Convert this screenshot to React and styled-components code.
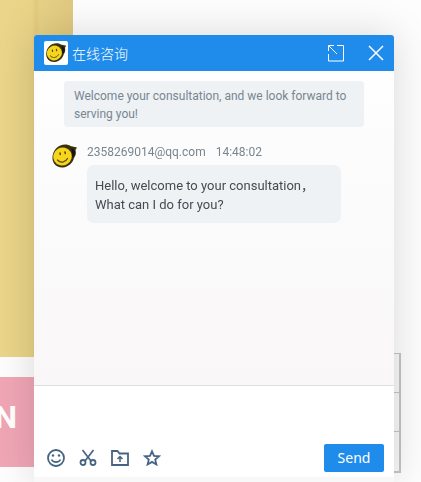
import React from "react";
import styled, { createGlobalStyle } from "styled-components";

const GlobalStyle = createGlobalStyle`
  *, *::before, *::after { box-sizing: border-box; }
  html, body, #root { height: 100%; }
  body {
    margin: 0;
    overflow: hidden;
    background: #fdfdfd;
    font-family: Roboto, "Noto Sans CJK SC", sans-serif;
  }
`;

const Page = styled.main`
  display: flex;
  justify-content: space-between;
  align-items: flex-start;
  height: 100%;
  overflow: hidden;
`;

const Promo = styled.div`
  display: flex;
  flex-direction: column;
  gap: 20px;
`;

const Poster = styled.div`
  width: 73px;
  height: 357px;
  background: linear-gradient(90deg, #ead58a 0, #e9d387 32px, #e2ca7c 36px, #e6d085 40px, #e0c97f 73px);
`;

const Banner = styled.div`
  display: flex;
  align-items: center;
  justify-content: flex-end;
  width: 73px;
  height: 90px;
  padding: 0 56px 10px 0;
  background: #f0a6b5;
  color: #ffffff;
  font-family: Roboto, sans-serif;
  font-size: 32px;
  font-weight: 700;
`;

const Grid = styled.div`
  display: grid;
  grid-template-rows: repeat(3, 1fr);
  width: 60px;
  height: 120px;
  margin: 353px 20px 0 0;
  border: 1px solid #c4c4c4;
  border-width: 1px 2px 2px 0;
  background: #f8f8f8;
`;

const GridCell = styled.div`
  border-bottom: 1px solid #c4c4c4;
  &:last-child { border-bottom: 0; }
`;

const Chat = styled.section`
  position: fixed;
  inset: 35px 27px 0 34px;
  display: flex;
  flex-direction: column;
  border-radius: 3px 3px 0 0;
  background: #f8f8f8;
  box-shadow: 0 0 40px rgba(0, 0, 0, 0.15);
`;

const Header = styled.header`
  display: flex;
  align-items: center;
  height: 36px;
  padding: 0 10px;
  border-radius: 3px 3px 0 0;
  background: #1f8ceb;
  color: #ffffff;
`;

const HeaderAvatar = styled.span`
  display: flex;
  width: 24px;
  height: 24px;
  margin-right: 4px;
  padding: 1px;
  border-radius: 2px;
  background: #ffffff;
`;

const Title = styled.h1`
  flex: 1;
  margin: 0;
  padding-bottom: 1px;
  font-family: "Noto Sans CJK SC", sans-serif;
  font-size: 14px;
  font-weight: 300;
  line-height: 20px;
`;

const IconButton = styled.button`
  display: flex;
  padding: 0;
  border: 0;
  background: none;
  color: inherit;
  cursor: pointer;
`;

const HeaderActions = styled.div`
  display: flex;
  align-items: center;
  gap: 24px;
`;

const Messages = styled.div`
  flex: 1;
  padding: 10px 0 0;
  background: linear-gradient(#fefefe, #f9f7f7);
`;

const Notice = styled.p`
  margin: 0 30px 16px;
  padding: 6px 10px 4px;
  border-radius: 4px;
  background: #eef2f5;
  color: #788691;
  font-size: 12px;
  line-height: 18px;
`;

const Message = styled.article`
  display: flex;
  gap: 9px;
  padding: 0 53px 0 17px;
`;

const MessageAvatar = styled.span`
  display: flex;
  flex: none;
  width: 27px;
  height: 27px;
`;

const MessageBody = styled.div`
  flex: 1;
`;

const Meta = styled.div`
  display: flex;
  gap: 10px;
  margin-bottom: 4px;
  color: #788691;
  font-size: 12px;
  line-height: 18px;
  white-space: nowrap;
`;

const Bubble = styled.p`
  margin: 0;
  padding: 11px 8px 9px;
  border-radius: 7px;
  background: #eef2f5;
  color: #454b52;
  font-size: 13px;
  line-height: 19px;
  white-space: nowrap;
`;

const Composer = styled.form`
  display: flex;
  flex-direction: column;
  margin-bottom: 5px;
  border-top: 1px solid #dedfe1;
  background: #ffffff;
`;

const Input = styled.textarea`
  display: block;
  width: 100%;
  height: 58px;
  padding: 8px 12px;
  border: 0;
  outline: 0;
  resize: none;
  background: transparent;
  font: 13px/19px Roboto, "Noto Sans CJK SC", sans-serif;
`;

const Toolbar = styled.div`
  display: flex;
  align-items: center;
  gap: 12px;
  padding: 0 10px 5px 12px;
  color: #466482;
`;

const SendButton = styled.button`
  width: 60px;
  height: 28px;
  margin-left: auto;
  padding: 0;
  border: 0;
  border-radius: 2px;
  background: #1f8ceb;
  color: #ffffff;
  font: 14px/20px "Noto Sans", sans-serif;
  cursor: pointer;
`;

const Face = () => (
  <svg width="100%" height="100%" viewBox="0 0 27 27" fill="none" aria-hidden="true">
    <path d="M5 5.500C9 1 16 .5 19.500 3L26 4.500 24.500 7c1 3 0 6-1.500 8-1 5-6 9-11 9.500C6 25 2 21 1.500 16c-.3-4 1-8 3.500-10.500Z" fill="#3a310e" />
    <ellipse cx="11.500" cy="13.500" rx="9.300" ry="9" transform="rotate(-30 11.500 13.500)" fill="#f5d61d" />
    <path d="M20 5c4 1 5 5 3 8l-2 1.500C21.500 11 21 8 20 5Z" fill="#17150e" />
    <path d="M6.500 17c3 3.500 8 2.500 10-1.500" stroke="#5c480c" strokeWidth="1.200" strokeLinecap="round" />
    <path d="m9 10 .3 1.500M14 9l.3 1.500" stroke="#5c480c" strokeWidth="1.500" strokeLinecap="round" />
  </svg>
);

const ExpandIcon = () => (
  <svg width="16" height="17" viewBox="0 0 16 17" fill="none" stroke="currentColor" aria-hidden="true">
    <path d="M9 .5h6.500v15.500H.5V9M.5 6V.5H6M1 1l8 8" />
  </svg>
);

const CloseIcon = () => (
  <svg width="16" height="16" viewBox="0 0 16 16" fill="none" stroke="currentColor" aria-hidden="true">
    <path d="m1 1 14 14M15 1 1 15" strokeWidth="1.500" />
  </svg>
);

const ToolIcon = styled.svg.attrs({
  width: 20,
  height: 20,
  viewBox: "0 0 20 20",
  fill: "none",
  stroke: "currentColor",
  strokeWidth: 2,
  "aria-hidden": true,
})`
  display: block;
`;

const SmileIcon = () => (
  <ToolIcon>
    <circle cx="10" cy="10" r="8" strokeWidth="1.800" />
    <path d="M5.500 11.500c1.500 3.500 7.500 3.500 9 0" strokeWidth="1.600" />
    <circle cx="7" cy="7.500" r="1.200" fill="currentColor" stroke="none" />
    <circle cx="13" cy="7.500" r="1.200" fill="currentColor" stroke="none" />
  </ToolIcon>
);

const ScissorsIcon = () => (
  <ToolIcon>
    <path d="m4.500 2 8.500 11M15.500 2 7 13" strokeWidth="1.700" />
    <circle cx="5" cy="14.500" r="2.500" strokeWidth="1.800" />
    <circle cx="15" cy="14.500" r="2.500" strokeWidth="1.800" />
  </ToolIcon>
);

const FolderIcon = () => (
  <ToolIcon>
    <path d="M2 3h5.500l2 2.500H18V17H2Z" strokeWidth="1.800" />
    <path d="M10 14V9M7.500 11 10 8.500l2.500 2.500" strokeWidth="1.500" />
  </ToolIcon>
);

const StarIcon = () => (
  <ToolIcon>
    <path d="m10 3.300 2 4.600 5 .4-3.800 3.300 1.200 4.900-4.400-2.600-4.400 2.600 1.200-4.900L3 8.300l5-.4Z" strokeWidth="1.800" />
  </ToolIcon>
);

const tools = [
  { label: "Emoji", Icon: SmileIcon },
  { label: "Screenshot", Icon: ScissorsIcon },
  { label: "Upload file", Icon: FolderIcon },
  { label: "Rate", Icon: StarIcon },
];

export default function App() {
  return (
    <>
      <GlobalStyle />
      <Page>
        <Promo>
          <Poster />
          <Banner>N</Banner>
        </Promo>
        <Grid>
          <GridCell />
          <GridCell />
          <GridCell />
        </Grid>
      </Page>
      <Chat>
        <Header>
          <HeaderAvatar><Face /></HeaderAvatar>
          <Title>在线咨询</Title>
          <HeaderActions>
            <IconButton type="button" aria-label="Expand"><ExpandIcon /></IconButton>
            <IconButton type="button" aria-label="Close"><CloseIcon /></IconButton>
          </HeaderActions>
        </Header>
        <Messages>
          <Notice>Welcome your consultation, and we look forward to serving you!</Notice>
          <Message>
            <MessageAvatar><Face /></MessageAvatar>
            <MessageBody>
              <Meta>
                <span>2358269014@qq.com</span>
                <time>14:48:02</time>
              </Meta>
              <Bubble>
                Hello, welcome to your consultation，
                <br />
                What can I do for you?
              </Bubble>
            </MessageBody>
          </Message>
        </Messages>
        <Composer onSubmit={(event) => event.preventDefault()}>
          <Input aria-label="Message" />
          <Toolbar>
            {tools.map(({ label, Icon }) => (
              <IconButton key={label} type="button" aria-label={label}><Icon /></IconButton>
            ))}
            <SendButton type="submit">Send</SendButton>
          </Toolbar>
        </Composer>
      </Chat>
    </>
  );
}
